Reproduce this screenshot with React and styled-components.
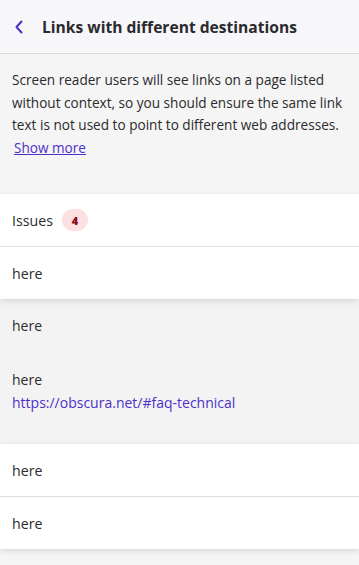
import React from "react"
import styled, { createGlobalStyle } from "styled-components"

const GlobalStyle = createGlobalStyle`
  html, body {
    margin: 0;
    padding: 0;
    background: #f5f5f6;
  }
  body {
    font-family: "Open Sans", "Noto Sans", sans-serif;
    color: #2b2b2b;
  }
`

const issues = [
  { id: 1, text: 'here' },
  { id: 2, text: 'here', expanded: true, url: 'https://obscura.net/#faq-technical' },
  { id: 3, text: 'here' },
  { id: 4, text: 'here' },
]

export default function App() {
  const before = issues.slice(0, 1)
  const open = issues.find((i) => i.expanded)
  const after = issues.slice(2)

  return (
    <Page>
      <GlobalStyle />
      <Header>
        <BackButton aria-label="Back">
          <svg width="10" height="14" viewBox="0 0 10 14" fill="none">
            <path d="M7.5 1.5L2.5 7l5 5.5" stroke="#4b31c9" strokeWidth="2" strokeLinecap="round" strokeLinejoin="round" />
          </svg>
        </BackButton>
        <Title>Links with different destinations</Title>
      </Header>

      <Description>
        Screen reader users will see links on a page listed without context, so you should ensure the same link text is not used to point to different web addresses.{' '}
        <ShowMore href="#">Show more</ShowMore>
      </Description>

      <Card>
        <Row>
          Issues <Badge>4</Badge>
        </Row>
        {before.map((item) => (
          <Row key={item.id}>{item.text}</Row>
        ))}
      </Card>

      <Expanded>
        <ExpandedTitle>{open.text}</ExpandedTitle>
        <Detail>
          <span>{open.text}</span>
          <UrlLink href="#">{open.url}</UrlLink>
        </Detail>
      </Expanded>

      <Card>
        {after.map((item) => (
          <Row key={item.id}>{item.text}</Row>
        ))}
      </Card>
    </Page>
  )
}

const Page = styled.div`
  width: 359px;
  min-height: 565px;
  background: #f5f5f6;
`

const Header = styled.header`
  display: flex;
  align-items: center;
  height: 54px;
  padding: 0 12px;
  box-sizing: border-box;
  background: #f7f7f9;
  border-bottom: 1px solid #d9d9dc;
  gap: 17px;
`

const BackButton = styled.button`
  display: flex;
  align-items: center;
  justify-content: center;
  width: 12px;
  height: 20px;
  padding: 0;
  border: none;
  background: none;
  margin-left: 1px;
`

const Title = styled.h1`
  margin: 0;
  font-size: 15.6px;
  font-weight: 700;
  color: #2a2a2e;
`

const Description = styled.p`
  margin: 0;
  padding: 15px 12px 35px;
  font-size: 13.6px;
  line-height: 22.6px;
  color: #2b2b2b;
`

const ShowMore = styled.a`
  color: #4b31c9;
  text-decoration: underline;
  margin-left: 2px;
`

const Card = styled.section`
  background: #ffffff;
  box-shadow: 0 2px 6px rgba(0, 0, 0, 0.12);
  position: relative;
  z-index: 1;
`

const Row = styled.div`
  display: flex;
  align-items: center;
  gap: 9px;
  height: 52px;
  padding: 0 12px;
  font-size: 14.2px;
  color: #2b2b2b;
  & + & {
    border-top: 1px solid #dededf;
  }
`

const Badge = styled.span`
  display: inline-flex;
  align-items: center;
  justify-content: center;
  min-width: 26px;
  height: 22px;
  border-radius: 11px;
  background: #fde0e2;
  color: #8a0b19;
  font-size: 11px;
  font-weight: 800;
`

const Expanded = styled.section`
  background: #f3f3f4;
  padding: 0 12px 33px;
`

const ExpandedTitle = styled.div`
  display: flex;
  align-items: center;
  height: 53px;
  font-size: 14px;
`

const Detail = styled.div`
  display: flex;
  flex-direction: column;
  gap: 6px;
  padding-top: 19px;
  font-size: 14px;
  line-height: 17px;
`

const UrlLink = styled.a`
  color: #4b31c9;
  text-decoration: none;
`
